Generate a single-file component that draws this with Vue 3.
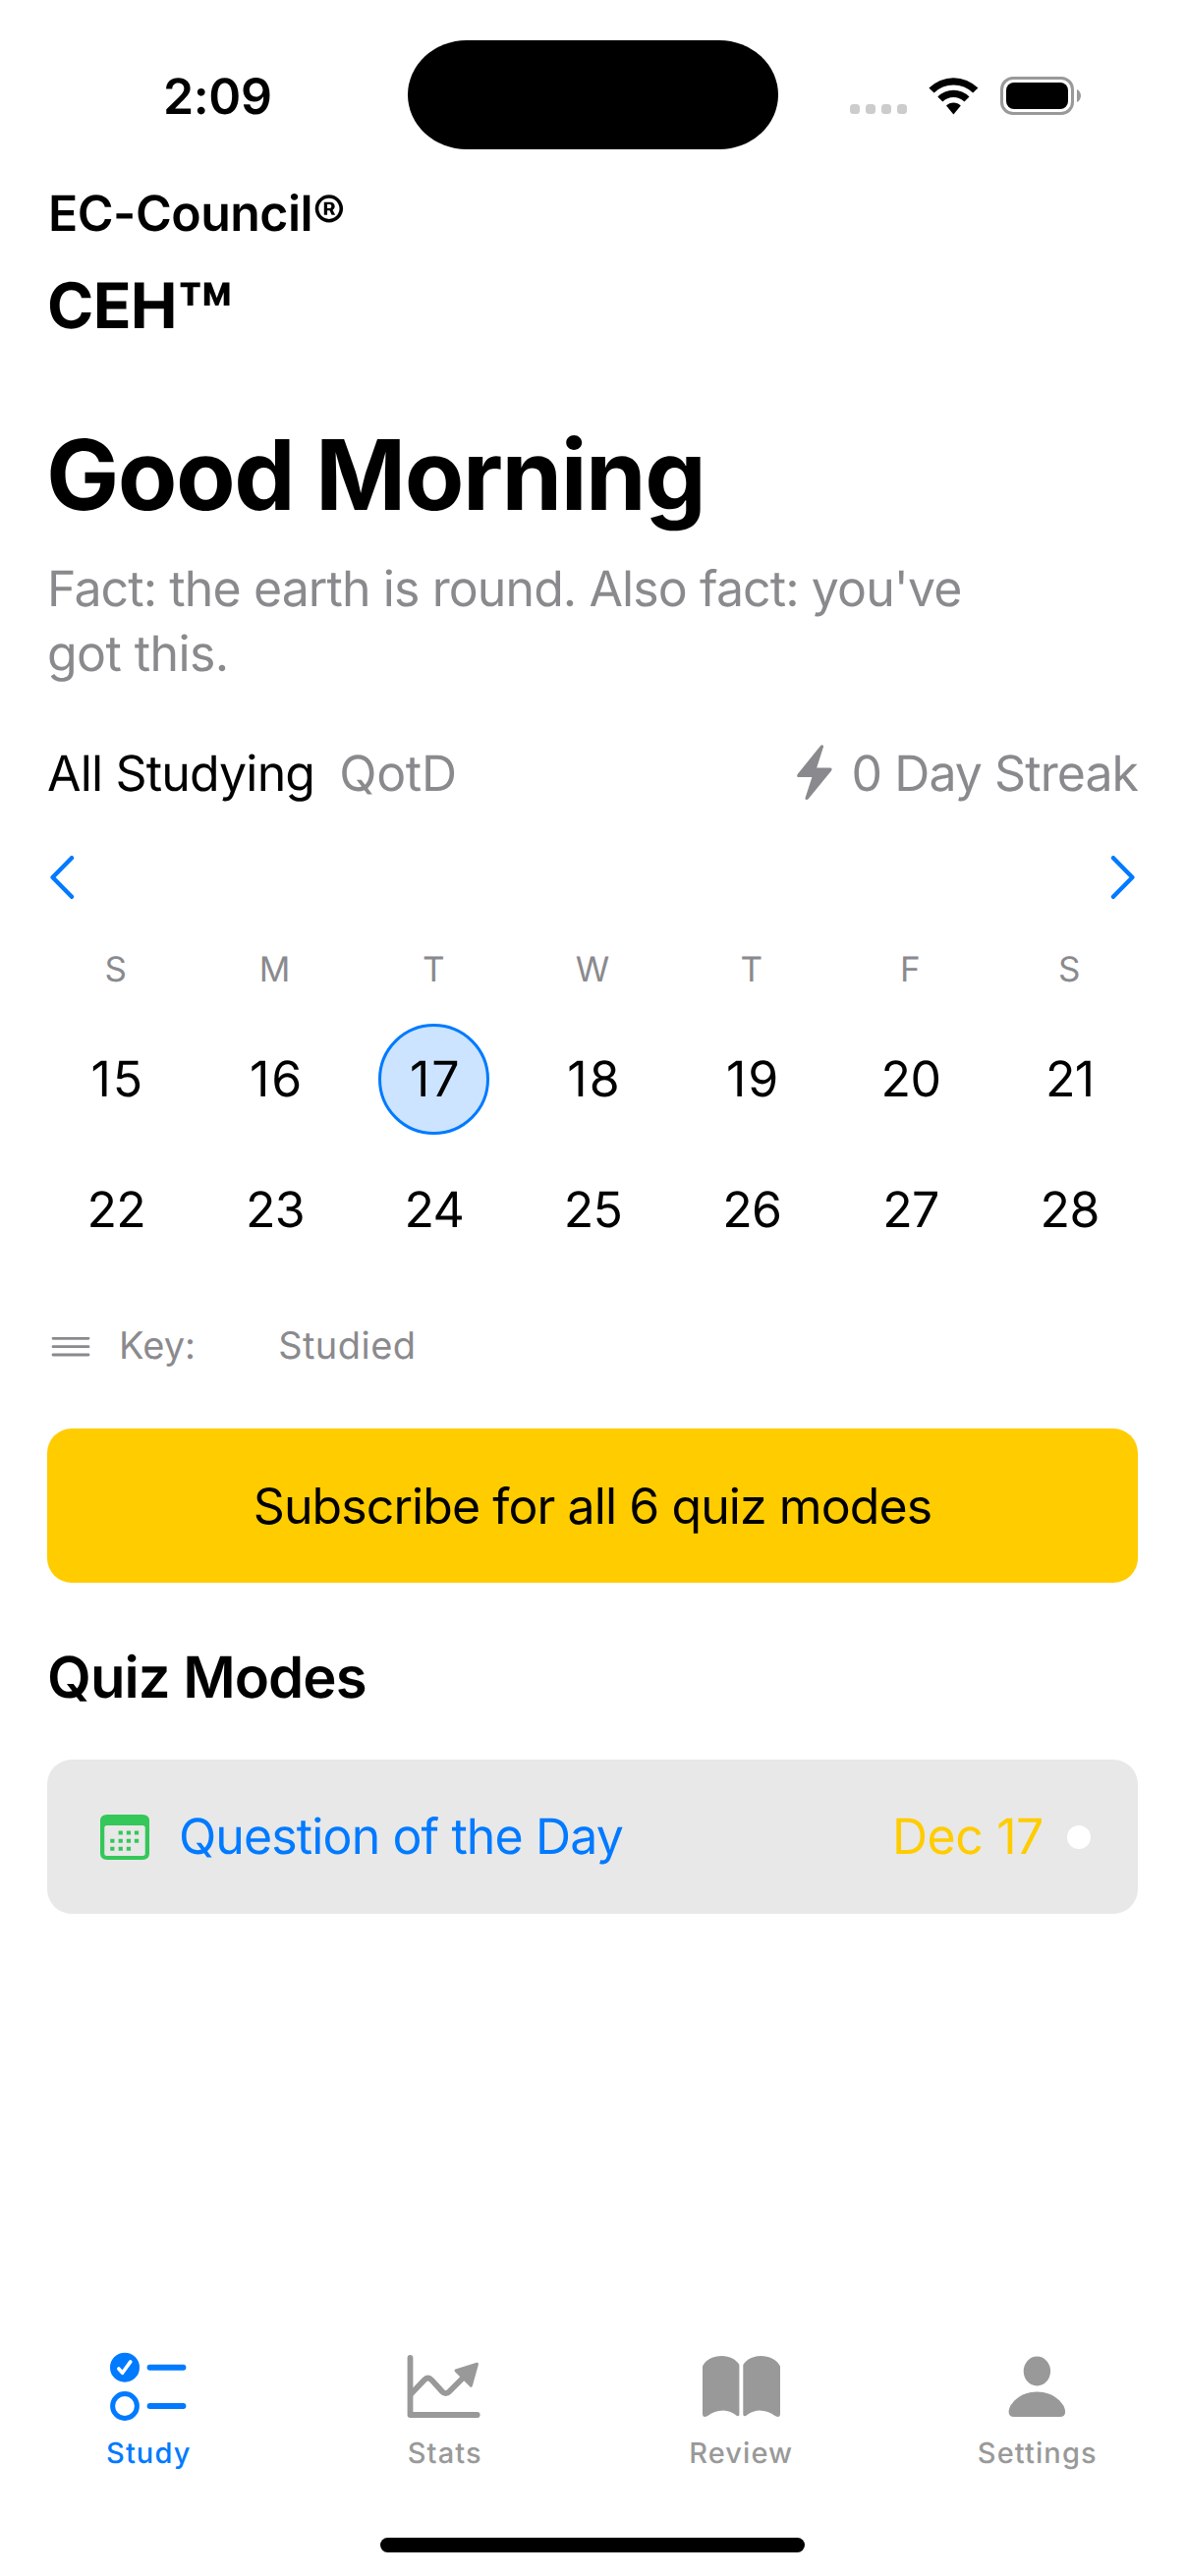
<script setup>
const weekdays = ['S', 'M', 'T', 'W', 'T', 'F', 'S']
const days = [15, 16, 17, 18, 19, 20, 21, 22, 23, 24, 25, 26, 27, 28]
const today = 17
</script>

<template>
  <div class="screen">
    <header class="status">
      <div class="clock">2:09</div>
      <div class="island"></div>
      <div class="indicators">
        <div class="cell-dots"><i></i><i></i><i></i><i></i></div>
        <svg class="wifi" width="51" height="38" viewBox="0 0 51 38">
          <path d="M.4 10.6A35.3 35.3 0 0 1 50.4 10.6L45.2 15.6A28 28 0 0 0 5.6 15.6Z" />
          <path d="M9.3 19.6A22.6 22.6 0 0 1 41.5 19.6L36.4 24.6A15.5 15.5 0 0 0 14.4 24.6Z" />
          <path d="M18 28.6A10.3 10.3 0 0 1 32.8 28.6L25.4 37.6Z" />
        </svg>
        <div class="battery"><div class="charge"></div></div>
        <svg class="nub" width="4" height="13" viewBox="0 0 4 13"><path d="M0 0C2.4 1.2 4 3.6 4 6.5S2.4 11.8 0 13Z" /></svg>
      </div>
    </header>

    <main class="content">
      <div class="vendor">EC-Council®</div>
      <div class="exam">CEH<span class="tm">™</span></div>
      <h1 class="greeting">Good Morning</h1>
      <p class="quote">Fact: the earth is round. Also fact: you've <span class="quote-end">got this.</span></p>

      <div class="filters">
        <span class="tab-all">All Studying</span>
        <span class="tab-qotd">QotD</span>
        <svg class="bolt" width="36" height="57" viewBox="0 0 36 57">
          <path d="M24.2.9C25.2-.4 27.4.3 27 2.2L20.2 23.5H34C35.6 23.5 36 25.2 35.1 26.5L11.6 55.3C10.4 56.8 8 55.9 8.6 53.9L15.4 33H1.8C.2 33-.3 31.3.7 29.9Z" />
        </svg>
        <span class="streak">0 Day Streak</span>
      </div>

      <nav class="pager">
        <svg width="26" height="44" viewBox="0 0 26 44"><path d="M23 2.2L3.6 22L23 41.8" /></svg>
        <svg width="26" height="44" viewBox="0 0 26 44"><path d="M3 2.2L22.4 22L3 41.8" /></svg>
      </nav>

      <div class="week-head">
        <span v-for="(d, i) in weekdays" :key="i">{{ d }}</span>
      </div>
      <div class="days">
        <div v-for="d in days" :key="d" class="cell">
          <span class="day" :class="{ today: d === today, loose: d < 20 }">{{ d }}</span>
        </div>
      </div>

      <div class="legend">
        <svg width="40" height="21" viewBox="0 0 40 21"><path d="M2 2.3H38M2 10.7H38M2 19H38" /></svg>
        <span class="key">Key:</span>
        <span class="studied">Studied</span>
      </div>

      <button class="subscribe">Subscribe for all 6 quiz modes</button>

      <h2 class="section">Quiz Modes</h2>

      <div class="mode">
        <svg class="calendar" width="50" height="46" viewBox="0 0 47 46" preserveAspectRatio="none">
          <path fill-rule="evenodd" d="M6.5 0H40.5Q47 0 47 6.5V39.5Q47 46 40.5 46H6.5Q0 46 0 39.5V6.5Q0 0 6.5 0ZM6.5 11Q4 11 4 13.5V39.5Q4 42 6.5 42H40.5Q43 42 43 39.5V13.5Q43 11 40.5 11Z" />
          <path d="M17.5 16.5h4v4h-4zM25.2 16.5h4v4h-4zM32.8 16.5h4v4h-4zM9.6 24.7h4v4h-4zM17.5 24.7h4v4h-4zM25.2 24.7h4v4h-4zM32.8 24.7h4v4h-4zM9.6 32.8h4v4h-4zM17.5 32.8h4v4h-4zM25.2 32.8h4v4h-4z" />
        </svg>
        <span class="mode-name">Question of the Day</span>
        <span class="mode-date">Dec 17</span>
        <span class="mode-dot"></span>
      </div>
    </main>

    <footer class="tabbar">
      <div class="tab active">
        <svg width="84" height="80" viewBox="0 0 84 80">
          <circle cx="18" cy="19.7" r="15" fill="currentColor" />
          <path d="M11.8 21L15.6 25.3L23.8 13.9" fill="none" stroke="#fff" stroke-width="3.6" stroke-linecap="round" stroke-linejoin="round" />
          <circle cx="18" cy="59" r="12.4" fill="none" stroke="currentColor" stroke-width="5" />
          <path d="M43.6 19.7H77.4M43.6 59H77.4" stroke="currentColor" stroke-width="6" stroke-linecap="round" />
        </svg>
        <span>Study</span>
      </div>
      <div class="tab">
        <svg width="84" height="80" viewBox="0 0 84 80">
          <g fill="none" stroke="currentColor" stroke-width="5.8" stroke-linecap="round" stroke-linejoin="round">
            <path d="M7.5 10V68H75.7" />
            <path d="M8 47L21.8 32.4Q25.5 28.6 29.2 32.4L40 44.2Q43.6 48 47.3 44.2L62 29.5" />
          </g>
          <path d="M75.5 16.3L54 22.9L69.3 38.3Z" fill="currentColor" stroke="currentColor" stroke-width="3" stroke-linejoin="round" />
        </svg>
        <span>Stats</span>
      </div>
      <div class="tab">
        <svg width="84" height="80" viewBox="0 0 84 80">
          <path fill="currentColor" d="M3 18.5C6 12 14 8 22.5 8C30.5 8 37.5 11.8 40.4 17V67.5Q40.4 69.8 38 69C34 65.6 29 63.4 24 63.4C18 63.4 12.5 65.6 8.2 69Q3 71.5 3 67.5Z" />
          <path fill="currentColor" d="M44.3 17C47.5 11.8 54 8 62.3 8C70.5 8 79 12 82 18.5V67.5Q82 71.5 76.8 69C72.5 65.6 67 63.4 61 63.4C56 63.4 51 65.6 47 69Q44.3 69.8 44.3 67.5Z" />
        </svg>
        <span>Review</span>
      </div>
      <div class="tab">
        <svg width="84" height="80" viewBox="0 0 84 80">
          <ellipse cx="42.4" cy="23.5" rx="13.7" ry="15" fill="currentColor" />
          <path fill="currentColor" d="M19 70Q13.6 70 13.6 65C13.6 57 25 44.6 42.4 44.6S71.1 57 71.1 65Q71.1 70 65.6 70Z" />
        </svg>
        <span>Settings</span>
      </div>
    </footer>
    <div class="home"></div>
  </div>
</template>

<style>
body {
  background: #fff;
}
</style>

<style scoped>
.screen {
  display: flex;
  flex-direction: column;
  width: 1206px;
  height: 2622px;
  overflow: hidden;
  background: #fff;
  color: #000;
  font-family: Inter, "Liberation Sans", sans-serif;
  font-size: 50px;
  line-height: 60px;
  text-rendering: geometricPrecision;
  white-space: nowrap;
}
svg {
  display: block;
  flex: none;
}

.status {
  display: flex;
  flex: none;
  height: 188px;
}
.clock {
  box-sizing: border-box;
  flex: none;
  width: 415px;
  padding: 69px 0 0 166px;
  font-weight: 600;
  letter-spacing: -0.36px;
}
.island {
  flex: none;
  width: 376.5px;
  height: 111px;
  margin-top: 41.3px;
  border-radius: 60px / 55.5px;
  background: #000;
}
.indicators {
  display: flex;
  flex: none;
  height: 39px;
  margin: 78px 0 0 73.5px;
}
.cell-dots {
  display: flex;
  gap: 6px;
  margin-top: 28px;
}
.cell-dots i {
  width: 10px;
  height: 10px;
  border-radius: 3.5px;
  background: #ccc;
}
.wifi {
  margin: 1px 0 0 22px;
}
.battery {
  box-sizing: border-box;
  width: 75px;
  height: 39px;
  margin-left: 22px;
  padding: 3px;
  border: 3px solid #999;
  border-radius: 13px;
}
.charge {
  height: 27px;
  border-radius: 8px;
  background: #000;
}
.nub {
  margin: 13px 0 0 3px;
  fill: #999;
}

.content {
  flex: 1;
  padding: 0 48px;
}
.vendor {
  padding-left: 1px;
  font-weight: 600;
  letter-spacing: -0.5px;
}
.exam {
  margin-top: 25px;
  font-size: 64px;
  line-height: 78px;
  font-weight: 700;
  letter-spacing: -0.7px;
}
.tm {
  font-size: 90px;
  line-height: 0;
  vertical-align: -19px;
}
.greeting {
  margin: 72px 0 0 -1px;
  font-size: 99px;
  line-height: 120px;
  font-weight: 700;
  letter-spacing: -1.5px;
}
.quote {
  width: 1000px;
  margin: 24px 0 0;
  color: #8a8a8e;
  line-height: 66px;
  letter-spacing: -0.9px;
  white-space: normal;
}
.quote-end {
  letter-spacing: -0.6px;
}
.filters {
  display: flex;
  margin-top: 59px;
  color: #8a8a8e;
}
.tab-all {
  color: #000;
  letter-spacing: -0.82px;
}
.tab-qotd {
  margin-left: 25px;
  letter-spacing: -0.3px;
}
.bolt {
  margin: 0 19.5px 0 auto;
  fill: #8a8a8e;
}
.streak {
  letter-spacing: -0.95px;
}
.pager {
  display: flex;
  justify-content: space-between;
  margin: 53px 2px 0;
}
.pager path {
  fill: none;
  stroke: #007aff;
  stroke-width: 4.4;
  stroke-linecap: round;
  stroke-linejoin: round;
}
.week-head,
.days {
  display: grid;
  grid-template-columns: repeat(7, 1fr);
  margin: 51px -11px 0;
}
.week-head {
  color: #8a8a8e;
  font-size: 35px;
  line-height: 42px;
  text-align: center;
}
.days {
  row-gap: 20px;
  margin-top: 34px;
}
.cell {
  display: flex;
  justify-content: center;
}
.day {
  box-sizing: border-box;
  width: 113px;
  height: 113px;
  padding-left: 1px;
  border: 3px solid transparent;
  border-radius: 50%;
  line-height: 109px;
  text-align: center;
  letter-spacing: -0.7px;
}
.loose {
  padding-left: 4px;
  letter-spacing: 2px;
}
.today {
  border-color: #007aff;
  background: #cce4ff;
}
.legend {
  display: flex;
  align-items: center;
  margin-top: 59px;
  color: #8a8a8e;
  font-size: 38px;
  line-height: 46px;
}
.legend svg {
  margin-left: 4px;
}
.legend path {
  stroke: #8a8a8e;
  stroke-width: 2.8;
  stroke-linecap: round;
}
.key {
  margin-left: 29px;
  letter-spacing: 0.1px;
}
.studied {
  margin-left: 84px;
  letter-spacing: 0.45px;
}
.subscribe {
  display: block;
  width: 100%;
  height: 157px;
  margin-top: 61px;
  padding: 0;
  border: 0;
  border-radius: 25px;
  background: #fc0;
  color: #000;
  font: inherit;
  letter-spacing: -0.92px;
}
.section {
  margin: 61px 0 0;
  font-size: 58px;
  line-height: 70px;
  font-weight: 600;
  letter-spacing: -0.95px;
}
.mode {
  display: flex;
  align-items: center;
  box-sizing: border-box;
  height: 157px;
  margin-top: 49px;
  padding: 0 48px 0 54px;
  border-radius: 25px;
  background: #e8e8e8;
}
.calendar {
  fill: #34c759;
}
.mode-name {
  margin-left: 30px;
  color: #007aff;
  letter-spacing: -0.88px;
}
.mode-date {
  margin-left: auto;
  color: #fc0;
  letter-spacing: -0.4px;
}
.mode-dot {
  width: 24px;
  height: 24px;
  margin-left: 24px;
  border-radius: 50%;
  background: #fff;
}

.tabbar {
  display: flex;
  flex: none;
  height: 193px;
}
.tab {
  display: flex;
  flex: 1;
  flex-direction: column;
  align-items: center;
  color: #999;
  font-size: 29px;
  line-height: 36px;
  font-weight: 500;
  letter-spacing: 1.1px;
}
.tab svg {
  margin-bottom: 9px;
}
.tab span {
  padding-left: 1px;
}
.active {
  color: #007aff;
}
.home {
  flex: none;
  width: 432px;
  height: 15px;
  margin: 0 auto 24px;
  border-radius: 7.5px;
  background: #000;
}
</style>
